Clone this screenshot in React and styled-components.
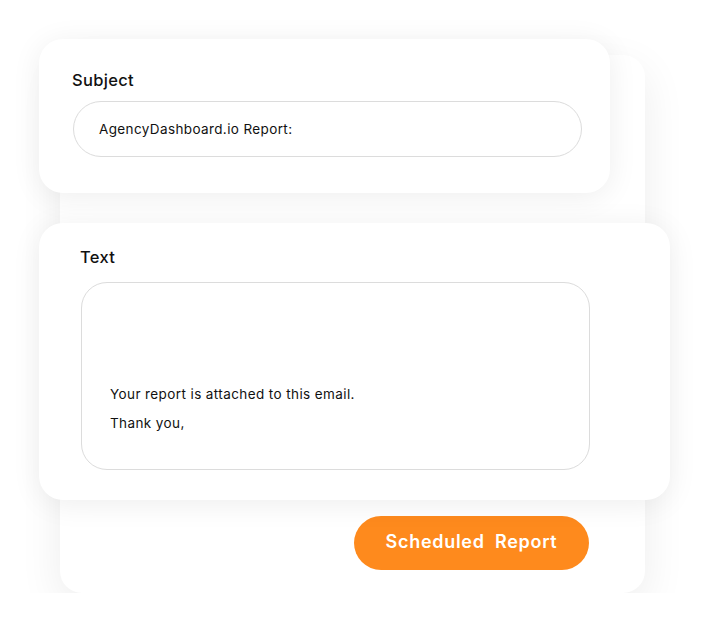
import React from "react";
import styled, { createGlobalStyle } from "styled-components";

const Global = createGlobalStyle`
  body {
    margin: 0;
    background: #ffffff;
    font-family: Inter, "Open Sans", sans-serif;
    color: #111;
  }
`;

const Page = styled.div`
  padding: 55px 0 0 60px;
`;

const BackCard = styled.div`
  width: 585px;
  box-sizing: border-box;
  background: #fff;
  border-radius: 22px;
  box-shadow: 0 14px 44px rgba(0, 0, 0, 0.075);
  display: flex;
  flex-direction: column;
  padding-bottom: 23px;
`;

const Card = styled.div`
  box-sizing: border-box;
  width: ${(p) => p.$width}px;
  margin-left: -21px;
  margin-top: ${(p) => p.$top}px;
  padding: ${(p) => p.$pad};
  background: #fff;
  border-radius: 24px;
  box-shadow: 0 4px 30px rgba(0, 0, 0, 0.07);
  position: relative;
`;

const Label = styled.div`
  font-size: 16.5px;
  font-weight: 500;
  line-height: 20px;
  letter-spacing: 0.3px;
  color: #111;
  margin-left: ${(p) => p.$indent || 0}px;
`;

const Input = styled.div`
  height: 56px;
  box-sizing: border-box;
  border: 1px solid #dcdcdc;
  border-radius: 28px;
  display: flex;
  align-items: center;
  padding-left: 25px;
  font-size: 13.5px;
  letter-spacing: 0.38px;
  color: #111;
`;

const TextArea = styled.div`
  height: 188px;
  box-sizing: border-box;
  border: 1px solid #dcdcdc;
  border-radius: 26px;
  padding: 97px 0 0 28px;
  font-size: 13.5px;
  letter-spacing: 0.4px;
  line-height: 29px;
  color: #111;
`;

const Button = styled.button`
  align-self: flex-end;
  margin: 16px 56px 0 0;
  width: 235px;
  height: 54px;
  padding: 0 0 3px;
  border: none;
  border-radius: 27px;
  background: #fe8a1d;
  color: #fff;
  font-family: Inter, "Open Sans", sans-serif;
  font-size: 18px;
  font-weight: 600;
  letter-spacing: 0.7px;
  white-space: pre;
  cursor: pointer;
`;

export default function App() {
  return (
    <Page>
      <Global />
      <BackCard>
        <Card $width={571} $top={-16} $pad="31px 28px 36px 34px">
          <Label $indent={-1}>Subject</Label>
          <Input style={{ marginTop: 11 }}>AgencyDashboard.io Report:</Input>
        </Card>
        <Card $width={631} $top={30} $pad="24px 80px 30px 42px">
          <Label $indent={-1}>Text</Label>
          <TextArea style={{ marginTop: 15 }}>
            <div>Your report is attached to this email.</div>
            <div>Thank you,</div>
          </TextArea>
        </Card>
        <Button>{"Scheduled  Report"}</Button>
      </BackCard>
    </Page>
  );
}
